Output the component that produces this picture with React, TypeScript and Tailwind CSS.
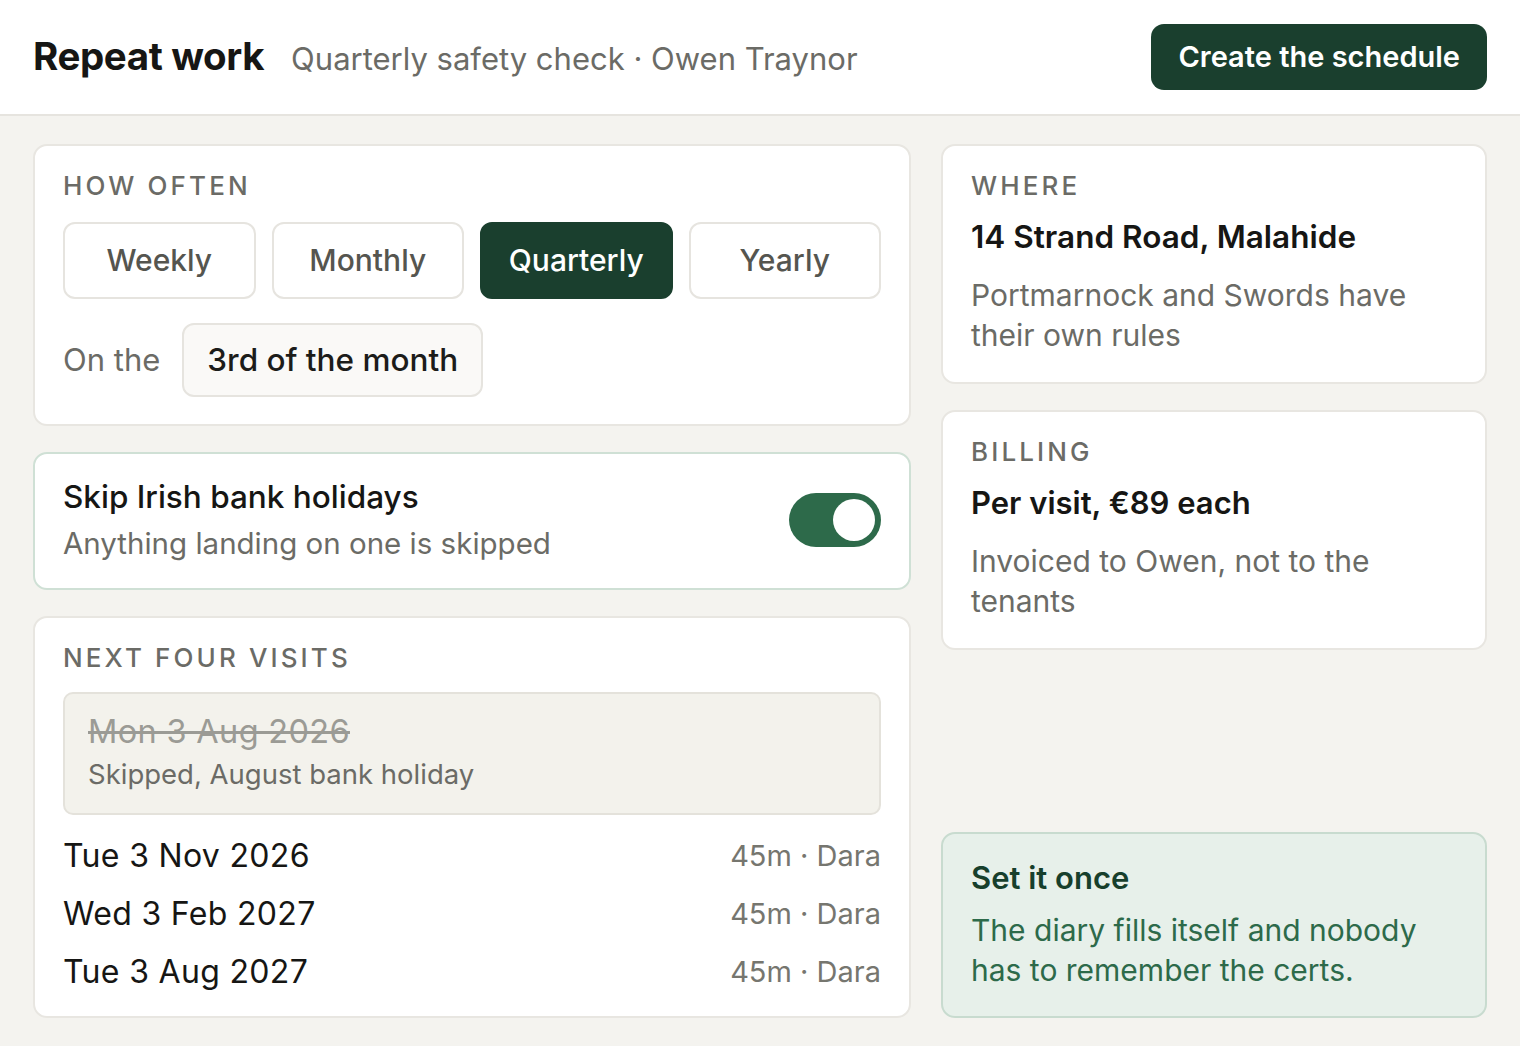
import { useState } from "react";

const FREQS = ["Weekly", "Monthly", "Quarterly", "Yearly"];

const VISITS = [
  { date: "Tue 3 Nov 2026", meta: "45m · Dara" },
  { date: "Wed 3 Feb 2027", meta: "45m · Dara" },
  { date: "Tue 3 Aug 2027", meta: "45m · Dara" },
];

function Label({ children }: { children: React.ReactNode }) {
  return (
    <div className="text-[26px] font-medium uppercase leading-[32px] tracking-[0.12em] text-[#6b6b66]">
      {children}
    </div>
  );
}

function Card({ children, className = "" }: { children: React.ReactNode; className?: string }) {
  return (
    <section className={`rounded-[14px] border-2 border-[#e8e6e1] bg-white ${className}`}>
      {children}
    </section>
  );
}

export default function App() {
  const [freq, setFreq] = useState("Quarterly");
  const [skip, setSkip] = useState(true);

  return (
    <div
      className="min-h-screen bg-[#f4f3ef] text-[#1c1c1a]"
      style={{ fontFamily: "Inter, 'Noto Sans', sans-serif" }}
    >
      <header className="flex h-[116px] items-center justify-between border-b-2 border-[#e6e4df] bg-white pl-[33px] pr-[33px]">
        <div className="flex items-baseline gap-[27px]">
          <h1 className="text-[38.5px] font-bold tracking-[-0.01em] text-[#161614]">Repeat work</h1>
          <div className="text-[31px] text-[#6b6b66]">Quarterly safety check · Owen Traynor</div>
        </div>
        <button className="h-[66px] rounded-[13px] bg-[#1a3f2e] px-[27px] text-[29px] font-semibold text-white">
          Create the schedule
        </button>
      </header>

      <main className="grid grid-cols-[878px_546px] gap-[30px] px-[33px] pt-[28px] pb-[28px]">
        <div className="flex flex-col gap-[26px]">
          <Card className="px-[28px] pt-[24px] pb-[27px]">
            <Label>How often</Label>
            <div className="mt-[20px] grid grid-cols-4 gap-[16px]">
              {FREQS.map((f) => {
                const on = f === freq;
                return (
                  <button
                    key={f}
                    onClick={() => setFreq(f)}
                    className={
                      on
                        ? "h-[77px] rounded-[12px] border-2 border-[#1a3f2e] bg-[#1a3f2e] text-[30px] font-medium text-white"
                        : "h-[77px] rounded-[12px] border-2 border-[#e6e4df] bg-white text-[30px] font-medium text-[#55554f]"
                    }
                  >
                    {f}
                  </button>
                );
              })}
            </div>
            <div className="mt-[24px] flex items-center gap-[22px]">
              <span className="text-[31px] text-[#6b6b66]">On the</span>
              <div className="flex h-[74px] items-center rounded-[12px] border-2 border-[#e6e4df] bg-[#faf9f7] px-[23px] text-[31.5px] font-medium text-[#1c1c1a]">
                3rd of the month
              </div>
            </div>
          </Card>

          <section className="flex items-center justify-between rounded-[14px] border-2 border-[#cfe0d5] bg-white px-[28px] pt-[23px] pb-[25px]">
            <div>
              <div className="text-[31.5px] font-medium leading-[40px] text-[#161614]">Skip Irish bank holidays</div>
              <div className="mt-[6px] text-[29.5px] leading-[40px] text-[#6b6b66]">Anything landing on one is skipped</div>
            </div>
            <button
              onClick={() => setSkip(!skip)}
              className={`flex h-[54px] w-[92px] items-center rounded-full p-[6px] ${
                skip ? "justify-end bg-[#2d6a4a]" : "justify-start bg-[#d6d4cf]"
              }`}
            >
              <span className="h-[42px] w-[42px] rounded-full bg-white" />
            </button>
          </section>

          <Card className="px-[28px] pt-[24px] pb-[15px]">
            <Label>Next four visits</Label>
            <div className="mt-[18px] rounded-[10px] border-2 border-[#e4e2db] bg-[#f3f2ec] px-[23px] pt-[17px] pb-[20px]">
              <div className="text-[32.5px] leading-[42px] tracking-[0.01em] text-[#9b9b95] line-through">Mon 3 Aug 2026</div>
              <div className="mt-[2px] text-[27.5px] leading-[38px] text-[#6b6b66]">Skipped, August bank holiday</div>
            </div>
            <div className="mt-[12px] flex flex-col">
              {VISITS.map((v) => (
                <div key={v.date} className="flex h-[58px] items-center justify-between">
                  <span className="text-[32px] tracking-[0.01em] text-[#161614]">{v.date}</span>
                  <span className="text-[29px] text-[#76766f]">{v.meta}</span>
                </div>
              ))}
            </div>
          </Card>
        </div>

        <div className="flex flex-col gap-[26px]">
          <Card className="px-[28px] pt-[24px] pb-[27px]">
            <Label>Where</Label>
            <div className="mt-[15px] text-[31.5px] font-semibold leading-[40px] text-[#161614]">14 Strand Road, Malahide</div>
            <div className="mt-[18px] text-[30px] leading-[40px] text-[#6b6b66]">
              Portmarnock and Swords have their own rules
            </div>
          </Card>

          <Card className="px-[28px] pt-[24px] pb-[27px]">
            <Label>Billing</Label>
            <div className="mt-[15px] text-[31px] font-semibold leading-[40px] text-[#161614]">Per visit, €89 each</div>
            <div className="mt-[18px] text-[30px] leading-[40px] text-[#6b6b66]">
              Invoiced to Owen, not to the tenants
            </div>
          </Card>

          <section className="mt-auto rounded-[14px] border-2 border-[#c8dbcf] bg-[#e7f0ea] px-[28px] pt-[24px] pb-[26px]">
            <div className="text-[31px] font-semibold leading-[40px] text-[#173f2c]">Set it once</div>
            <div className="mt-[12px] text-[30px] leading-[40px] text-[#2d6a4a]">
              The diary fills itself and nobody has to remember the certs.
            </div>
          </section>
        </div>
      </main>
    </div>
  );
}
